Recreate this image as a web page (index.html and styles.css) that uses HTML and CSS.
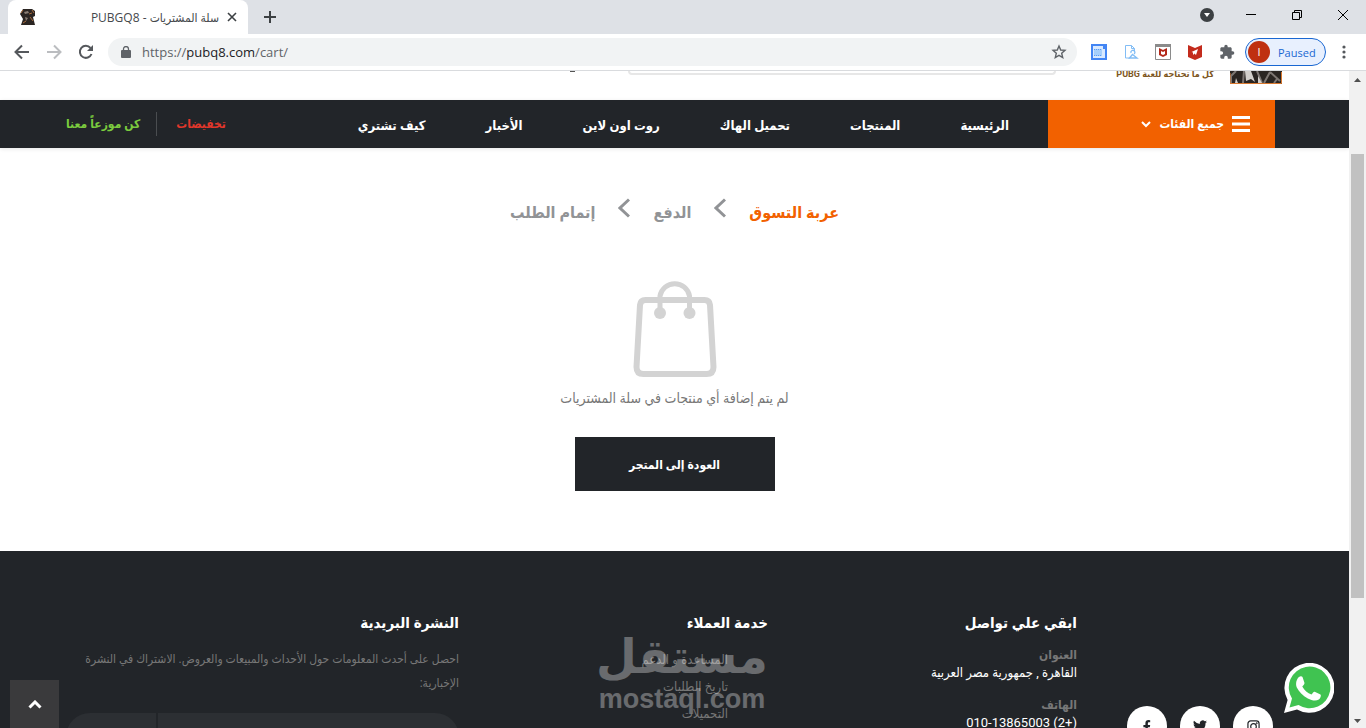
FILE: index.html
```html
<!DOCTYPE html>
<html lang="ar">
<head>
  <meta charset="UTF-8">
  <meta name="viewport" content="width=device-width, initial-scale=1.0">
  <title>سلة المشتريات - PUBGQ8</title>
  <link rel="stylesheet" href="styles.css">
</head>
<body>
  <!-- Browser tabs -->
  <div class="tab-strip">
    <div class="tab">
      <svg class="favicon" width="16" height="16" viewBox="0 0 16 16">
        <path d="M3 0h9l3 2v5l-2 1 2 8H1l2-6-3-5z" fill="#2b2522"/>
        <path d="M4 3l4-1 1 2-4 1zM5 8l3 1-2 3z" fill="#8a7d74"/>
        <path d="M1 4l2-3M12 1l2 3M10 8l3 4M3 14l3-2M9 5l3-1" fill="none" stroke="#a66a3c"/>
      </svg>
      <span class="tab-title" dir="rtl">سلة المشتريات - PUBGQ8</span>
      <button class="icon-btn" aria-label="Close tab">
        <svg width="10" height="10" viewBox="0 0 10 10"><path d="M1 1l8 8M9 1l-8 8" stroke="#3c4043" stroke-width="1.600"/></svg>
      </button>
    </div>
    <button class="icon-btn new-tab" aria-label="New tab">
      <svg width="12" height="12" viewBox="0 0 12 12"><path d="M6 0v12M0 6h12" stroke="#3c4043" stroke-width="2"/></svg>
    </button>
    <div class="window-buttons">
      <button class="icon-btn tab-search" aria-label="Search tabs">
        <svg width="14" height="14" viewBox="0 0 14 14"><circle cx="7" cy="7" r="7" fill="#3c4043"/><path d="M4 5h6l-3 4z" fill="#fff"/></svg>
      </button>
      <button class="icon-btn" aria-label="Minimize">
        <svg width="10" height="10" viewBox="0 0 10 10"><path d="M0 4.500h10" stroke="#000"/></svg>
      </button>
      <button class="icon-btn" aria-label="Restore">
        <svg width="10" height="10" viewBox="0 0 10 10"><path d="M.5 2.500h7v7h-7zM2.500 2.500v-2h7v7h-2" fill="none" stroke="#000"/></svg>
      </button>
      <button class="icon-btn" aria-label="Close">
        <svg width="10" height="10" viewBox="0 0 10 10"><path d="M0 0l10 10M10 0L0 10" stroke="#000"/></svg>
      </button>
    </div>
  </div>

  <!-- Address bar -->
  <div class="toolbar">
    <button class="icon-btn" aria-label="Back">
      <svg width="16" height="16" viewBox="0 0 16 16"><path d="M15 8H2M8 1.500L1.500 8 8 14.500" fill="none" stroke="#55585c" stroke-width="2"/></svg>
    </button>
    <button class="icon-btn" aria-label="Forward">
      <svg width="16" height="16" viewBox="0 0 16 16"><path d="M1 8h13M8 1.500L14.500 8 8 14.500" fill="none" stroke="#bbbdc0" stroke-width="2"/></svg>
    </button>
    <button class="icon-btn" aria-label="Reload">
      <svg width="16" height="16" viewBox="0 0 16 16"><path d="M13.500 10A6 6 0 1 1 12.500 4" fill="none" stroke="#55585c" stroke-width="2"/><path d="M15 1v6H9z" fill="#55585c"/></svg>
    </button>
    <div class="address">
      <svg width="10" height="13" viewBox="0 0 10 13"><rect y="4" width="10" height="8" rx="1" fill="#5f6368"/><path d="M2.500 4.500V3a2.500 2.500 0 0 1 5 0v1.500" fill="none" stroke="#5f6368" stroke-width="1.300"/></svg>
      <span class="url">https://<b>pubq8.com</b>/cart/</span>
      <svg width="16" height="16" viewBox="0 0 16 16"><path d="M8 2l1.700 4 4.300.4-3.300 2.900 1 4.200L8 11.300l-3.700 2.200 1-4.200L2 6.400 6.300 6z" fill="none" stroke="#5f6368" stroke-width="1.400"/></svg>
    </div>
    <div class="extensions">
      <svg width="16" height="16" viewBox="0 0 16 16"><path d="M0 0h16v16H0z" fill="#4285f4"/><path d="M2 2h10v3h2v9H2z" fill="#d8e9ff"/><path d="M3 5h8v7H3z" fill="#a6cffb"/><path d="M3 5.500h8M3 11.500h8" stroke="#5b9cf5" stroke-dasharray="1 1"/></svg>
      <svg width="16" height="16" viewBox="0 0 16 16"><path d="M7 14H2.500V1.500h6l3 3V7M8.500 1.500v3h3" fill="none" stroke="#82bdf5"/><path d="M6.500 14l3-3.500 4.500 3.500zM8 9a2 2 0 1 1 3 1" fill="none" stroke="#82bdf5" stroke-width="1.300"/></svg>
      <svg width="16" height="16" viewBox="0 0 16 16"><path d="M.5.5h15v15H.5z" fill="#fff" stroke="#8b8b8b"/><path d="M0 0h16v3H0z" fill="#8b8b8b"/><path d="M4 4l4 2 4-2v7l-4 2-4-2z" fill="#b3281a"/><path d="M6 7l2 1 2-1v3l-2 1-2-1z" fill="#fff"/></svg>
      <svg width="16" height="16" viewBox="0 0 16 16"><path d="M1 1l7 3 7-3v12l-7 3-7-3z" fill="#c32b1c"/><path d="M11 5L9 11 7.500 9.500 6 11V8.500L4.500 8z" fill="#fff"/></svg>
      <svg width="16" height="16" viewBox="0 0 24 24"><path d="M20.500 11H19V7c0-1.100-.9-2-2-2h-4V3.500a2.500 2.500 0 0 0-5 0V5H4c-1.100 0-2 .9-2 2v3.800h1.500a2.700 2.700 0 0 1 0 5.400H2V20c0 1.100.9 2 2 2h3.800v-1.500a2.700 2.700 0 0 1 5.400 0V22H17c1.100 0 2-.9 2-2v-4h1.500a2.500 2.500 0 0 0 0-5z" fill="#5f6368"/></svg>
    </div>
    <button class="profile"><span class="avatar">I</span>Paused</button>
    <button class="icon-btn" aria-label="Menu">
      <svg width="4" height="14" viewBox="0 0 4 14" fill="#55585c"><circle cx="2" cy="2" r="1.600"/><circle cx="2" cy="7" r="1.600"/><circle cx="2" cy="12" r="1.600"/></svg>
    </button>
  </div>

  <div class="viewport">
    <div class="site" dir="rtl">
      <!-- Scrolled header -->
      <header class="header">
        <svg class="logo" width="52" height="13" viewBox="0 0 52 13">
          <path d="M0 0h52v13H0z" fill="#2a2522"/>
          <path d="M1 13V5l5-5M14 0l-1 12M27 0l5 12M40 1l-6 11M40 1l10 9M44 12l3-4" stroke="#7d7672" stroke-width="2" fill="none"/>
          <path d="M15 0h6l4 11-4-3-5 2zM6 7l2 5H5zM28 5l4 7h-4z" fill="#d3cfcb"/>
          <path d="M0 2v10.500h51.500V1" fill="none" stroke="#d9782f"/>
        </svg>
        <span class="slogan">كل ما تحتاجه للعبة PUBG</span>
        <div class="search-edge"></div>
        <div class="header-mark"></div>
      </header>

      <nav class="nav">
        <button class="categories">
          <svg width="18" height="16" viewBox="0 0 18 16"><path d="M0 1.500h18M0 8h18M0 14.500h18" stroke="#fff" stroke-width="3"/></svg>
          جميع الفئات
          <svg width="10" height="7" viewBox="0 0 10 7"><path d="M1 1l4 4 4-4" fill="none" stroke="#fff" stroke-width="2"/></svg>
        </button>
        <div class="menu">
          <a href="#">الرئيسية</a>
          <a href="#">المنتجات</a>
          <a href="#">تحميل الهاك</a>
          <a href="#">روت اون لاين</a>
          <a href="#">الأخبار</a>
          <a href="#">كيف تشتري</a>
        </div>
        <div class="promo">
          <a class="sale" href="#">تخفيضات</a>
          <a class="dealer" href="#">كن موزعاً معنا</a>
        </div>
      </nav>

      <!-- Empty cart -->
      <main class="cart">
        <div class="steps">
          <a class="active" href="#">عربة التسوق</a>
          <svg width="12" height="20" viewBox="0 0 12 20"><path d="M11 1.500L2 10l9 8.500" fill="none" stroke="#919396" stroke-width="3"/></svg>
          <a href="#">الدفع</a>
          <svg width="12" height="20" viewBox="0 0 12 20"><path d="M11 1.500L2 10l9 8.500" fill="none" stroke="#919396" stroke-width="3"/></svg>
          <a href="#">إتمام الطلب</a>
        </div>
        <svg class="bag" width="84" height="100" viewBox="0 0 84 100">
          <path d="M12.500 22h59q5 0 5.500 5l3.500 62q0 7-7 7h-63q-7 0-7-7L7 27q.5-5 5.500-5z" fill="none" stroke="#d3d3d3" stroke-width="6"/>
          <path d="M27 35V18a15 15 0 0 1 29.500 0v17" fill="none" stroke="#d3d3d3" stroke-width="5"/>
          <circle cx="27" cy="35" r="6" fill="#d3d3d3"/><circle cx="56.500" cy="35" r="6" fill="#d3d3d3"/>
        </svg>
        <p>لم يتم إضافة أي منتجات في سلة المشتريات</p>
        <a class="shop-btn" href="#">العودة إلى المتجر</a>
      </main>

      <footer class="footer">
        <div class="social">
          <a href="#" aria-label="Instagram"><svg width="13" height="13" viewBox="0 0 14 14" fill="none" stroke="#222529" stroke-width="1.300"><rect x="1" y="1" width="12" height="12" rx="3"/><circle cx="7" cy="7" r="3"/><circle cx="10.500" cy="3.500" r=".3"/></svg></a>
          <a href="#" aria-label="Twitter"><svg width="14" height="14" viewBox="0 0 24 24"><path d="M24 4.600a10 10 0 0 1-2.800.8 5 5 0 0 0 2.100-2.700 10 10 0 0 1-3.100 1.200 4.900 4.900 0 0 0-8.400 4.500A14 14 0 0 1 1.700 3.200a4.900 4.900 0 0 0 1.500 6.500 5 5 0 0 1-2.200-.6 4.900 4.900 0 0 0 3.900 4.900 5 5 0 0 1-2.200.1 4.900 4.900 0 0 0 4.600 3.400A10 10 0 0 1 0 19.500 14 14 0 0 0 21.500 7a10 10 0 0 0 2.500-2.400z" fill="#222529"/></svg></a>
          <a href="#" aria-label="Facebook"><svg width="8" height="13" viewBox="0 0 10 16"><path d="M3 16V9H.5V6H3V4c0-2.600 1.500-4 3.800-4L9 .2v2.500H7.700C6.500 2.700 6.100 3.400 6.100 4.200V6H9l-.5 3H6.100v7z" fill="#222529"/></svg></a>
        </div>
        <div class="contact">
          <h2>ابقي علي تواصل</h2>
          <h3>العنوان</h3>
          <p>القاهرة , جمهورية مصر العربية</p>
          <h3>الهاتف</h3>
          <p>(+2) 010-13865003</p>
        </div>
        <div class="service">
          <h2>خدمة العملاء</h2>
          <ul>
            <li><a href="#">المساعدة و الدعم</a></li>
            <li><a href="#">تاريخ الطلبات</a></li>
            <li><a href="#">التحميلات</a></li>
          </ul>
          <div class="watermark"><span>مستقل</span><span dir="ltr">mostaql.com</span></div>
        </div>
        <div class="newsletter">
          <h2>النشرة البريدية</h2>
          <p>احصل على أحدث المعلومات حول الأحداث والمبيعات والعروض. الاشتراك في النشرة الإخبارية:</p>
          <form>
            <input type="email" aria-label="البريد الإلكتروني">
            <button type="button" aria-label="اشتراك"></button>
          </form>
        </div>
      </footer>

      <a class="to-top" href="#" aria-label="Top"><svg width="14" height="9" viewBox="0 0 14 9"><path d="M1.500 7.500L7 2l5.500 5.500" fill="none" stroke="#fff" stroke-width="3"/></svg></a>
      <a class="whatsapp" href="#" aria-label="WhatsApp">
        <svg width="50" height="50" viewBox="0 0 50 50">
          <path d="M0 50l3.600-13A25 25 0 1 1 13 46.500z" fill="#fff"/>
          <path d="M5.500 44.500L8 35.500A20.800 20.800 0 1 1 14.500 42z" fill="#40c351"/>
          <path d="M15 14c1-1 3-1 3.500 0l2 6c0 1.500-1.500 2.500-2.200 3.500 2.200 4 5.200 6.500 9.200 8 1-1 2-3 3.200-2.700l5.800 2.700c1 1-.2 4-1.700 5-3 2-7 1-11-1-5-2.500-9-7-11-11-1.500-4-.3-8.500 2.200-10.500z" fill="#fff"/>
        </svg>
      </a>
    </div>

    <!-- Page scrollbar -->
    <div class="scrollbar">
      <svg width="17" height="17" viewBox="0 0 17 17"><path d="M5 11l3.500-4 3.500 4z" fill="#505050"/></svg>
      <div class="before"></div>
      <div class="thumb"></div>
      <div class="after"></div>
      <svg width="17" height="17" viewBox="0 0 17 17"><path d="M5 8l3.500 4L12 8z" fill="#505050"/></svg>
    </div>
  </div>
</body>
</html>
```
FILE: styles.css
```css
/* General Styling */
* {
  box-sizing: border-box;
}
body {
  margin: 0;
  height: 100vh;
  display: flex;
  flex-direction: column;
  overflow: hidden;
  background-color: #fff;
  font-family: Roboto, "DejaVu Sans Condensed", "DejaVu Sans", sans-serif;
  font-size: 12px;
}
a {
  color: inherit;
  text-decoration: none;
}
button {
  border: 0;
  padding: 0;
  font-family: inherit;
}
svg {
  display: block;
  flex: none;
}
h2, h3, p, ul {
  margin: 0;
  padding: 0;
}
.icon-btn {
  background: none;
}

/* Tab strip */
.tab-strip {
  flex: none;
  display: flex;
  height: 34px;
  padding-left: 8px;
  background-color: #dee1e6;
}
.tab {
  display: flex;
  align-items: center;
  width: 240px;
  padding: 0 11px 0 12px;
  background-color: #fff;
  border-radius: 8px 8px 0 0;
}
.tab-title {
  flex: 1;
  margin-right: 8px;
  color: #45484c;
  font-family: "Open Sans", "DejaVu Sans Condensed", sans-serif;
}
.new-tab {
  margin-left: 16px;
}
.window-buttons {
  display: flex;
  align-items: center;
  gap: 36px;
  margin-left: auto;
  padding: 0 18px 4px 0;
}
.tab-search {
  margin-right: -4px;
}

/* Toolbar */
.toolbar {
  flex: none;
  display: flex;
  align-items: center;
  gap: 16px;
  height: 37px;
  padding: 0 20px 0 14px;
  border-bottom: 1px solid #d9dbde;
}
.address {
  flex: 1;
  display: flex;
  align-items: center;
  gap: 11px;
  height: 28px;
  margin-left: -2px;
  padding: 0 10px 0 13px;
  border-radius: 14px;
  background-color: #f1f3f4;
}
.url {
  flex: 1;
  color: #5f6368;
  font-family: "Open Sans", sans-serif;
  font-size: 13px;
}
.url b {
  color: #202124;
  font-weight: normal;
}
.extensions {
  display: flex;
  align-items: center;
  gap: 16px;
  margin: 0 -6px 0 -2px;
}
.profile {
  display: flex;
  align-items: center;
  gap: 8px;
  width: 81px;
  height: 28px;
  padding-left: 2px;
  border: 1px solid #1967d2;
  border-radius: 14px;
  background-color: #e8f0fe;
  color: #1967d2;
  font-family: "Open Sans", sans-serif;
  font-size: 11px;
}
.avatar {
  width: 22px;
  border-radius: 50%;
  background-color: #bf3010;
  color: #fff;
  line-height: 22px;
}

/* Viewport */
.viewport {
  flex: 1;
  display: flex;
  min-height: 0;
}
.site {
  position: relative;
  flex: 1;
  overflow: hidden;
}
.scrollbar {
  display: flex;
  flex-direction: column;
  width: 17px;
  background-color: #f1f1f1;
}
.scrollbar .before {
  flex: 66;
}
.scrollbar .thumb {
  flex: 444;
  margin: 0 2px;
  background-color: #c1c1c1;
}
.scrollbar .after {
  flex: 113;
}

/* Header */
.header {
  display: flex;
  align-items: flex-start;
  height: 29px;
  padding: 0 67px 0 66px;
}
.slogan {
  margin: -5px 16px 0 0;
  color: #7d5622;
  font-size: 9px;
  font-weight: bold;
  line-height: 16px;
  white-space: nowrap;
}
.search-edge {
  width: 428px;
  height: 4px;
  margin-right: 60px;
  border: 2px solid #e7e7e7;
  border-top: 0;
  border-radius: 0 0 5px 5px;
}
.header-mark {
  width: 5px;
  height: 1px;
  margin-right: 53px;
  background-color: #555;
}

/* Navigation */
.nav {
  display: flex;
  align-items: center;
  height: 48px;
  padding: 0 74px 0 66px;
  background-color: #222529;
  box-shadow: 0 1px 4px rgba(0, 0, 0, 0.1);
  color: #fff;
  font-size: 12px;
  font-weight: bold;
  white-space: nowrap;
}
.categories {
  display: flex;
  align-items: center;
  gap: 8px;
  width: 227px;
  height: 48px;
  padding-right: 25px;
  background-color: #f26100;
  color: #fff;
  font-size: 12px;
  font-weight: bold;
}
.menu {
  display: flex;
  gap: 60px;
  margin-right: 39px;
  padding-top: 2px;
  font-size: 13px;
}
.promo {
  display: flex;
  align-items: center;
  margin-right: auto;
}
.sale {
  padding-left: 19px;
  border-left: 1px solid #4a4d50;
  color: #e2372b;
  line-height: 24px;
}
.dealer {
  margin-right: 16px;
  color: #7bcb3e;
}

/* Empty cart */
.cart {
  display: flex;
  flex-direction: column;
  align-items: center;
  height: 403px;
  padding-top: 50px;
}
.steps {
  display: flex;
  align-items: flex-start;
  gap: 23px;
  color: #919396;
  font-size: 16px;
  font-weight: bold;
  line-height: 30px;
}
.steps .active {
  color: #f26100;
}
.bag {
  margin-top: 50px;
}
.cart p {
  margin-top: 8px;
  color: #777;
  font-size: 14px;
  line-height: 24px;
}
.shop-btn {
  width: 200px;
  margin-top: 27px;
  padding-top: 2px;
  background-color: #222529;
  color: #fff;
  font-size: 12px;
  font-weight: bold;
  line-height: 52px;
  text-align: center;
}

/* Footer */
.footer {
  display: grid;
  grid-template-columns: 196px 309px 309px 1fr;
  min-height: 240px;
  padding: 56px 76px 0 66px;
  background-color: #222529;
  color: #777;
}
.footer h2 {
  color: #fff;
  font-size: 15px;
  line-height: 32px;
}
.social {
  display: flex;
  gap: 13px;
  padding-top: 99px;
}
.social a {
  display: flex;
  align-items: center;
  justify-content: center;
  width: 40px;
  height: 40px;
  border-radius: 50%;
  background-color: #fff;
}
.contact h3 {
  margin-top: 7px;
  font-size: 12px;
  line-height: 18px;
}
.contact p {
  margin-bottom: 14px;
  color: #fff;
  font-size: 13px;
  line-height: 18px;
}
.service {
  position: relative;
}
.service ul {
  margin: 7px 40px 0 0;
  list-style: none;
  font-size: 13px;
  line-height: 27px;
}
.watermark {
  position: absolute;
  top: 24px;
  right: 3px;
  display: flex;
  flex-direction: column;
  align-items: center;
  width: 166px;
  color: #fff;
  font-weight: bold;
  opacity: 0.32;
}
.watermark span {
  font-family: "Liberation Sans", "DejaVu Sans", sans-serif;
  font-size: 27px;
  line-height: 32px;
}
.watermark span:first-child {
  font-size: 47px;
  line-height: 52px;
}
.newsletter p {
  margin-top: 8px;
  line-height: 24px;
}
.newsletter form {
  display: flex;
  gap: 2px;
  margin-top: 18px;
}
.newsletter input {
  flex: 1;
  height: 48px;
  border: 0;
  border-radius: 0 24px 24px 0;
  background-color: #2c2f33;
}
.newsletter button {
  width: 90px;
  border-radius: 24px 0 0 24px;
  background-color: #2c2f33;
}

/* Floating buttons */
.to-top {
  position: absolute;
  left: 10px;
  bottom: 0;
  display: flex;
  align-items: center;
  justify-content: center;
  width: 49px;
  height: 48px;
  background-color: #3a3a3c;
}
.whatsapp {
  position: absolute;
  right: 15px;
  bottom: 15px;
}
```
